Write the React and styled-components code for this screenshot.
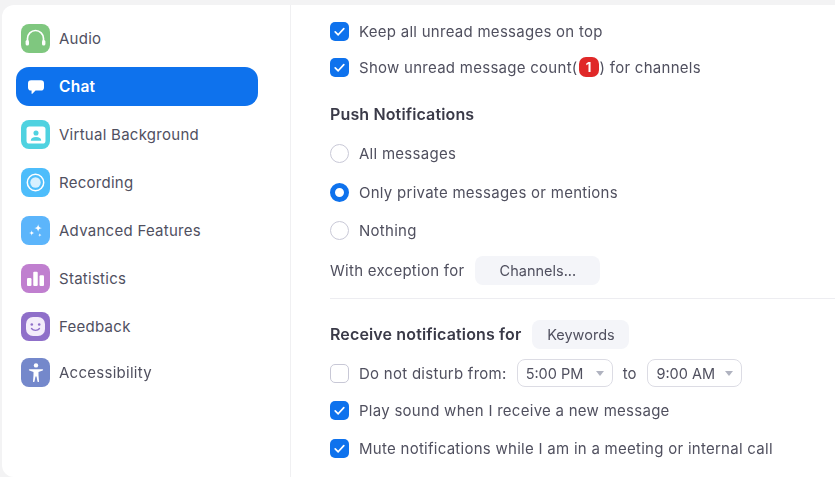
import React from "react";
import styled, { createGlobalStyle } from "styled-components";

const Global = createGlobalStyle`
  html, body { margin: 0; padding: 0; background: #f3f3f4; }
  body { font-family: Inter, "Liberation Sans", sans-serif; overflow: hidden; }
  #root { width: 835px; height: 477px; }
`;

const Shell = styled.div`
  width: 835px;
  height: 477px;
  padding: 5px 0 0 2px;
  box-sizing: border-box;
  filter: blur(0.7px);
`;

const Window = styled.div`
  display: flex;
  height: 472px;
  background: #fff;
  border-radius: 12px 0 0 12px;
`;

const Sidebar = styled.nav`
  width: 289px;
  flex: none;
  box-sizing: border-box;
  padding: 14px 0 0 14px;
  border-right: 1px solid #f0f0f2;
  display: flex;
  flex-direction: column;
  gap: 9px;
`;

const NavItem = styled.div`
  width: 242px;
  height: 39px;
  box-sizing: border-box;
  padding-left: 5px;
  display: flex;
  align-items: center;
  gap: 9px;
  border-radius: 13px;
  font-size: ${(p) => (p.$active ? 15.5 : 15)}px;
  letter-spacing: 0.27px;
  color: ${(p) => (p.$active ? "#fff" : "#50505f")};
  font-weight: ${(p) => (p.$active ? 600 : 400)};
  background: ${(p) => (p.$active ? "#0e72ed" : "transparent")};
  margin-top: ${(p) => p.$shift || 0}px;
`;

const Tile = styled.span`
  width: 29px;
  height: 29px;
  flex: none;
  border-radius: 8px;
  background: ${(p) => p.$bg || "transparent"};
  display: flex;
  align-items: center;
  justify-content: center;
`;

const Content = styled.main`
  flex: 1;
  min-width: 0;
  box-sizing: border-box;
  padding: 11px 0 0 39px;
  display: flex;
  flex-direction: column;
`;

const Row = styled.div`
  display: flex;
  align-items: center;
  height: 30px;
  margin-top: ${(p) => p.$top || 0}px;
  font-size: 15px;
  letter-spacing: 0.27px;
  color: #50505f;
  white-space: nowrap;
`;

const Strong = styled.span`
  font-size: 16px;
  font-weight: 600;
  color: #3a3a48;
  letter-spacing: 0.14px;
`;

const Box = styled.span`
  width: 19px;
  height: 19px;
  flex: none;
  box-sizing: border-box;
  margin-right: 10px;
  border-radius: 5px;
  display: flex;
  align-items: center;
  justify-content: center;
  background: ${(p) => (p.$on ? "#0e72ed" : "#fff")};
  border: ${(p) => (p.$on ? "none" : "1.5px solid #c8c8d6")};
`;

const Radio = styled.span`
  width: 19px;
  height: 19px;
  flex: none;
  box-sizing: border-box;
  margin-right: 10px;
  border-radius: 50%;
  background: #fff;
  border: ${(p) => (p.$on ? "5.5px solid #0e72ed" : "1.5px solid #c8c8d6")};
`;

const Badge = styled.span`
  width: 20px;
  height: 20px;
  margin: 0 1px;
  border-radius: 7px;
  background: #e02828;
  color: #fff;
  font-size: 13px;
  font-weight: 700;
  letter-spacing: 0;
  display: inline-flex;
  align-items: center;
  justify-content: center;
`;

const SoftButton = styled.span`
  height: 29px;
  width: ${(p) => p.$w}px;
  margin-left: ${(p) => p.$left}px;
  border-radius: 8px;
  background: #f4f5f9;
  display: inline-flex;
  align-items: center;
  justify-content: center;
  font-size: 14.5px;
  letter-spacing: 0;
`;

const Divider = styled.hr`
  height: 1px;
  border: 0;
  margin: 13px 0 0;
  background: #ededf1;
`;

const TimeSelect = styled.span`
  height: 28px;
  width: ${(p) => p.$w}px;
  margin-left: ${(p) => p.$left || 0}px;
  box-sizing: border-box;
  padding: 0 8px;
  border: 1.5px solid #dcdce4;
  border-radius: 8px;
  display: inline-flex;
  align-items: center;
  justify-content: space-between;
  font-size: 14.5px;
  letter-spacing: 0;
`;

const Caret = styled.span`
  width: 0;
  height: 0;
  border-left: 4px solid transparent;
  border-right: 4px solid transparent;
  border-top: 5px solid #b0b3c0;
`;

const To = styled.span`
  margin: 0 11px 0 10px;
  letter-spacing: 0;
`;

const Check = () => (
  <svg width="13" height="13" viewBox="0 0 13 13" fill="none">
    <path d="M2.2 6.8 5.2 9.8 10.8 3.6" stroke="#fff" strokeWidth="1.7" strokeLinecap="round" strokeLinejoin="round" />
  </svg>
);

const Headphones = () => (
  <svg width="23" height="23" viewBox="0 0 23 23" fill="none">
    <path d="M3.5 14V11.5a8 8 0 0 1 16 0V14" stroke="#fff" strokeWidth="1.7" />
    <rect x="1.6" y="13" width="3.4" height="5.6" rx="1.6" fill="#fff" />
    <rect x="18" y="13" width="3.4" height="5.6" rx="1.6" fill="#fff" />
  </svg>
);

const Bubble = () => (
  <svg width="18" height="16" viewBox="0 0 20 18" fill="#fff">
    <path d="M4.5 1.5h11A3.5 3.5 0 0 1 19 5v4.500a3.500 3.500 0 0 1-3.500 3.500H9.500l-3.600 3.600c-.4.3-.9.1-.9-.4V13h-.5A3.500 3.500 0 0 1 1 9.500V5a3.500 3.500 0 0 1 3.500-3.500Z" />
  </svg>
);

const Portrait = () => (
  <svg width="20" height="18" viewBox="0 0 21 19">
    <rect x="0.5" y="0.5" width="20" height="18" rx="3" fill="#fff" />
    <circle cx="10.5" cy="7.4" r="2.7" fill="#4fd2e0" />
    <path d="M5 15.600c0-2.600 2-3.900 5.500-3.900s5.500 1.300 5.500 3.900Z" fill="#4fd2e0" />
  </svg>
);

const Ring = () => (
  <svg width="23" height="23" viewBox="0 0 23 23">
    <circle cx="11.500" cy="11.500" r="8.200" fill="none" stroke="#fff" strokeWidth="1.500" />
    <circle cx="11.500" cy="11.500" r="5.200" fill="#d8f0ff" />
  </svg>
);

const Sparkles = () => (
  <svg width="18" height="18" viewBox="0 0 21 21" fill="#fff">
    <path d="M13 2.500c.5 3 1.500 4 4.500 4.500-3 .5-4 1.500-4.500 4.500-.5-3-1.500-4-4.500-4.500 3-.5 4-1.500 4.500-4.500Z" />
    <path d="M5.500 9.500c.3 2.200 1 2.900 3.200 3.200-2.200.3-2.900 1-3.200 3.200-.3-2.200-1-2.900-3.200-3.200 2.200-.3 2.900-1 3.200-3.200Z" />
    <path d="M15 13c.2 1.500.7 2 2.200 2.200-1.500.2-2 .7-2.200 2.200-.2-1.500-.7-2-2.200-2.200 1.500-.2 2-.7 2.200-2.200Z" />
  </svg>
);

const Bars = () => (
  <svg width="19" height="17" viewBox="0 0 21 19" fill="#fff">
    <rect x="1" y="9" width="5" height="9" rx="1.200" />
    <rect x="8" y="2" width="5" height="16" rx="1.200" />
    <rect x="15" y="6" width="5" height="12" rx="1.200" />
  </svg>
);

const Smile = () => (
  <svg width="23" height="23" viewBox="0 0 23 23">
    <rect x="2" y="2" width="19" height="19" rx="7" fill="#f3ecfa" />
    <circle cx="7.800" cy="9.500" r="1.300" fill="#8f6fc9" />
    <circle cx="15.200" cy="9.500" r="1.300" fill="#8f6fc9" />
    <path d="M7.500 13.500c1.800 2.400 6.200 2.400 8 0" fill="none" stroke="#8f6fc9" strokeWidth="1.300" strokeLinecap="round" />
  </svg>
);

const Person = () => (
  <svg width="16" height="20" viewBox="0 0 16 20" fill="#fff">
    <circle cx="8" cy="2.400" r="2.200" />
    <path d="M1.500 6.200h13c.8 0 .9 1.200.1 1.400L10.500 9V12l.5 6.500c0 .8-1.300.8-1.500 0L8.500 13.500h-1L6.500 18.500c-.2.8-1.500.8-1.500 0L5.500 12V9L1.400 7.600c-.8-.2-.7-1.400.1-1.400Z" />
  </svg>
);

const nav = [
  { label: "Audio", bg: "#7fc77f", icon: <Headphones /> },
  { label: "Chat", active: true, icon: <Bubble /> },
  { label: "Virtual Background", bg: "#4fd2e0", icon: <Portrait /> },
  { label: "Recording", bg: "#4dbdfb", icon: <Ring /> },
  { label: "Advanced Features", bg: "#5cb5fb", icon: <Sparkles /> },
  { label: "Statistics", bg: "#c07fcf", icon: <Bars /> },
  { label: "Feedback", bg: "#8f6fc9", icon: <Smile /> },
  { label: "Accessibility", bg: "#7488cb", icon: <Person />, shift: -2 },
];

export default function App() {
  return (
    <Shell>
      <Global />
      <Window>
        <Sidebar>
          {nav.map((item) => (
            <NavItem key={item.label} $active={item.active} $shift={item.shift}>
              <Tile $bg={item.bg}>{item.icon}</Tile>
              {item.label}
            </NavItem>
          ))}
        </Sidebar>
        <Content>
          <Row>
            <Box $on><Check /></Box>Keep all unread messages on top
          </Row>
          <Row $top={6}>
            <Box $on><Check /></Box>Show unread message count(<Badge>1</Badge>) for channels
          </Row>
          <Row $top={17}><Strong>Push Notifications</Strong></Row>
          <Row $top={9}><Radio />All messages</Row>
          <Row $top={9}><Radio $on />Only private messages or mentions</Row>
          <Row $top={8}><Radio />Nothing</Row>
          <Row $top={10}>
            With exception for<SoftButton $w={125} $left={11}>Channels...</SoftButton>
          </Row>
          <Divider />
          <Row $top={20}>
            <Strong>Receive notifications for</Strong>
            <SoftButton $w={97} $left={11}>Keywords</SoftButton>
          </Row>
          <Row $top={9}>
            <Box />Do not disturb from:
            <TimeSelect $w={96} $left={10}>5:00 PM<Caret /></TimeSelect>
            <To>to</To>
            <TimeSelect $w={95}>9:00 AM<Caret /></TimeSelect>
          </Row>
          <Row $top={7}><Box $on><Check /></Box>Play sound when I receive a new message</Row>
          <Row $top={8}><Box $on><Check /></Box>Mute notifications while I am in a meeting or internal call</Row>
        </Content>
      </Window>
    </Shell>
  );
}
